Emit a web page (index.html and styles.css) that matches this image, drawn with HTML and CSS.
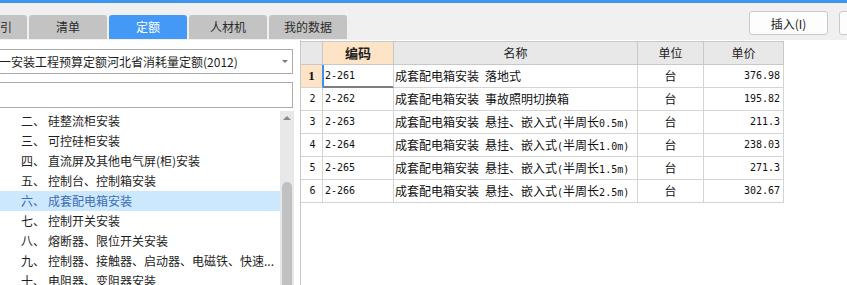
FILE: index.html
```html
<!DOCTYPE html>
<html lang="zh-CN">
<head>
<meta charset="utf-8">
<title>定额</title>
<link rel="stylesheet" href="styles.css">
</head>
<body>
<div class="app">
  <header class="topbar">
    <nav class="tabs">
      <div class="tab">清单指引</div>
      <div class="tab">清单</div>
      <div class="tab active">定额</div>
      <div class="tab">人材机</div>
      <div class="tab">我的数据</div>
    </nav>
    <div class="actions">
      <button class="btn">插入(I)</button>
      <button class="btn">替换(R)</button>
    </div>
  </header>
  <main class="main">
    <aside class="left">
      <div class="select"><span class="select-text">全国统一安装工程预算定额河北省消耗量定额(2012)</span><span class="caret"></span></div>
      <div class="search"></div>
      <div class="tree">
        <ul class="list">
          <li><span class="num">二、</span>硅整流柜安装</li>
          <li><span class="num">三、</span>可控硅柜安装</li>
          <li><span class="num">四、</span>直流屏及其他电气屏(柜)安装</li>
          <li><span class="num">五、</span>控制台、控制箱安装</li>
          <li class="sel"><span class="num">六、</span>成套配电箱安装</li>
          <li><span class="num">七、</span>控制开关安装</li>
          <li><span class="num">八、</span>熔断器、限位开关安装</li>
          <li><span class="num">九、</span>控制器、接触器、启动器、电磁铁、快速...</li>
          <li><span class="num">十、</span>电阻器、变阻器安装</li>
        </ul>
        <div class="scrollbar"><span class="arrow-up"></span><span class="thumb"></span></div>
      </div>
    </aside>
    <section class="grid-panel">
      <div class="grid">
        <div class="c h"></div>
        <div class="c h hl">编码</div>
        <div class="c h">名称</div>
        <div class="c h">单位</div>
        <div class="c h">单价</div>

        <div class="c rn cur">1</div>
        <div class="c code cur">2-261</div>
        <div class="c name">成套配电箱安装<span class="a"> </span>落地式</div>
        <div class="c unit">台</div>
        <div class="c price">376.98</div>

        <div class="c rn">2</div>
        <div class="c code">2-262</div>
        <div class="c name">成套配电箱安装<span class="a"> </span>事故照明切换箱</div>
        <div class="c unit">台</div>
        <div class="c price">195.82</div>

        <div class="c rn">3</div>
        <div class="c code">2-263</div>
        <div class="c name">成套配电箱安装<span class="a"> </span>悬挂、嵌入式<span class="a">(</span>半周长<span class="a">0.5m)</span></div>
        <div class="c unit">台</div>
        <div class="c price">211.3</div>

        <div class="c rn">4</div>
        <div class="c code">2-264</div>
        <div class="c name">成套配电箱安装<span class="a"> </span>悬挂、嵌入式<span class="a">(</span>半周长<span class="a">1.0m)</span></div>
        <div class="c unit">台</div>
        <div class="c price">238.03</div>

        <div class="c rn">5</div>
        <div class="c code">2-265</div>
        <div class="c name">成套配电箱安装<span class="a"> </span>悬挂、嵌入式<span class="a">(</span>半周长<span class="a">1.5m)</span></div>
        <div class="c unit">台</div>
        <div class="c price">271.3</div>

        <div class="c rn">6</div>
        <div class="c code">2-266</div>
        <div class="c name">成套配电箱安装<span class="a"> </span>悬挂、嵌入式<span class="a">(</span>半周长<span class="a">2.5m)</span></div>
        <div class="c unit">台</div>
        <div class="c price">302.67</div>
      </div>
    </section>
  </main>
</div>
</body>
</html>
```

FILE: styles.css
```css
* { box-sizing: border-box; margin: 0; padding: 0; }

html, body {
  width: 847px;
  height: 285px;
  overflow: hidden;
  background: #fff;
}

body {
  font-family: "Noto Sans CJK SC", "Noto Sans", sans-serif;
  font-size: 12px;
  color: #222;
}

.app { width: 847px; height: 285px; overflow: hidden; }

/* ---------- top bar ---------- */
.topbar {
  height: 40px;
  background: #f0f0f0;
  border-top: 3px solid #3d93ee;
  display: flex;
  align-items: flex-start;
}

.tabs {
  display: flex;
  gap: 2px;
  margin-left: -51px;
  margin-top: 12px;
  flex-shrink: 0;
}

.tab {
  width: 78px;
  height: 24px;
  line-height: 24px;
  text-align: center;
  background: #c3c3c3;
  color: #2b2b2b;
  border-radius: 3px 3px 0 0;
  font-size: 12px;
}

.tab.active { background: #4399f5; color: #fff; }

.actions {
  display: flex;
  gap: 11px;
  margin-left: 402px;
  margin-top: 8px;
  flex-shrink: 0;
}

.btn {
  width: 79px;
  height: 24px;
  flex-shrink: 0;
  background: #fdfdfd;
  border: 1px solid #c9c9c9;
  border-radius: 3px;
  font-family: inherit;
  font-size: 12px;
  color: #222;
}

/* ---------- main ---------- */
.main {
  display: flex;
  height: 245px;
}

.left {
  width: 300px;
  flex-shrink: 0;
  display: flex;
  flex-direction: column;
}

.select {
  margin: 9px 0 0 -40px;
  width: 333px;
  height: 25px;
  border: 1px solid #acacac;
  background: #fff;
  display: flex;
  align-items: center;
  padding-left: 2px;
  white-space: nowrap;
  font-size: 12px;
  color: #1e1e1e;
}

.caret {
  margin-left: auto;
  margin-right: 4px;
  width: 0;
  height: 0;
  border-left: 3px solid transparent;
  border-right: 3px solid transparent;
  border-top: 3px solid #7a7a7a;
}

.search {
  margin: 8px 0 0 -40px;
  width: 333px;
  height: 26px;
  border: 1px solid #acacac;
  background: #fff;
}

.tree {
  margin-top: 3px;
  flex: 1;
  display: flex;
  min-height: 0;
}

.list {
  width: 280px;
  list-style: none;
  overflow: hidden;
}

.list li {
  height: 20px;
  line-height: 20px;
  padding-left: 21px;
  white-space: nowrap;
  overflow: hidden;
  color: #1e1e1e;
}

.list li.sel { background: #cce8ff; color: #3d6cb4; }

.num { display: inline-block; width: 27px; }

.scrollbar {
  width: 14px;
  background: #e8e8e8;
  display: flex;
  flex-direction: column;
  align-items: center;
}

.arrow-up {
  margin-top: 5px;
  width: 0;
  height: 0;
  border-left: 4px solid transparent;
  border-right: 4px solid transparent;
  border-bottom: 4px solid #8a8a8a;
}

.thumb {
  margin-top: 62px;
  width: 10px;
  flex: 1;
  background: #c1c1c1;
  border-radius: 5px 5px 0 0;
}

/* ---------- grid ---------- */
.grid-panel {
  flex: 1;
  border-left: 1px solid #c8c8c8;
  padding-top: 1px;
}

.grid {
  display: grid;
  grid-template-columns: 22px 71px 244px 66px 80px;
  grid-auto-rows: 23px;
  width: 483px;
  border-top: 1px solid #c8c8c8;
}

.c {
  border-right: 1px solid #d4d4d4;
  border-bottom: 1px solid #d4d4d4;
  line-height: 22px;
  white-space: nowrap;
  overflow: hidden;
  font-size: 12px;
  color: #111;
}

.h {
  background: #e8e8e8;
  text-align: center;
  border-color: #c8c8c8;
  color: #222;
}

.h.hl {
  background: #fde4c6;
  font-weight: bold;
  font-size: 13px;
}

.rn {
  text-align: center;
  padding-left: 2px;
  font-family: "DejaVu Sans Mono", monospace;
  font-size: 10px;
}

.rn.cur {
  background: #fde4c6;
  font-family: "Liberation Serif", serif;
  font-weight: bold;
  font-size: 13px;
  padding-left: 0;
  border-right-color: #3d8ef0;
}

.code {
  padding-left: 2px;
  font-family: "DejaVu Sans Mono", monospace;
  font-size: 10px;
}

.code.cur {
  border-bottom-color: #7d7d7d;
  box-shadow: inset 1px 0 #3d8ef0, inset 0 -1px #7d7d7d;
}

.name { padding-left: 1px; }

.a {
  font-family: "DejaVu Sans Mono", monospace;
  font-size: 10px;
}

.unit { text-align: center; }

.price {
  text-align: right;
  padding-right: 3px;
  font-family: "DejaVu Sans Mono", monospace;
  font-size: 10px;
}
```
